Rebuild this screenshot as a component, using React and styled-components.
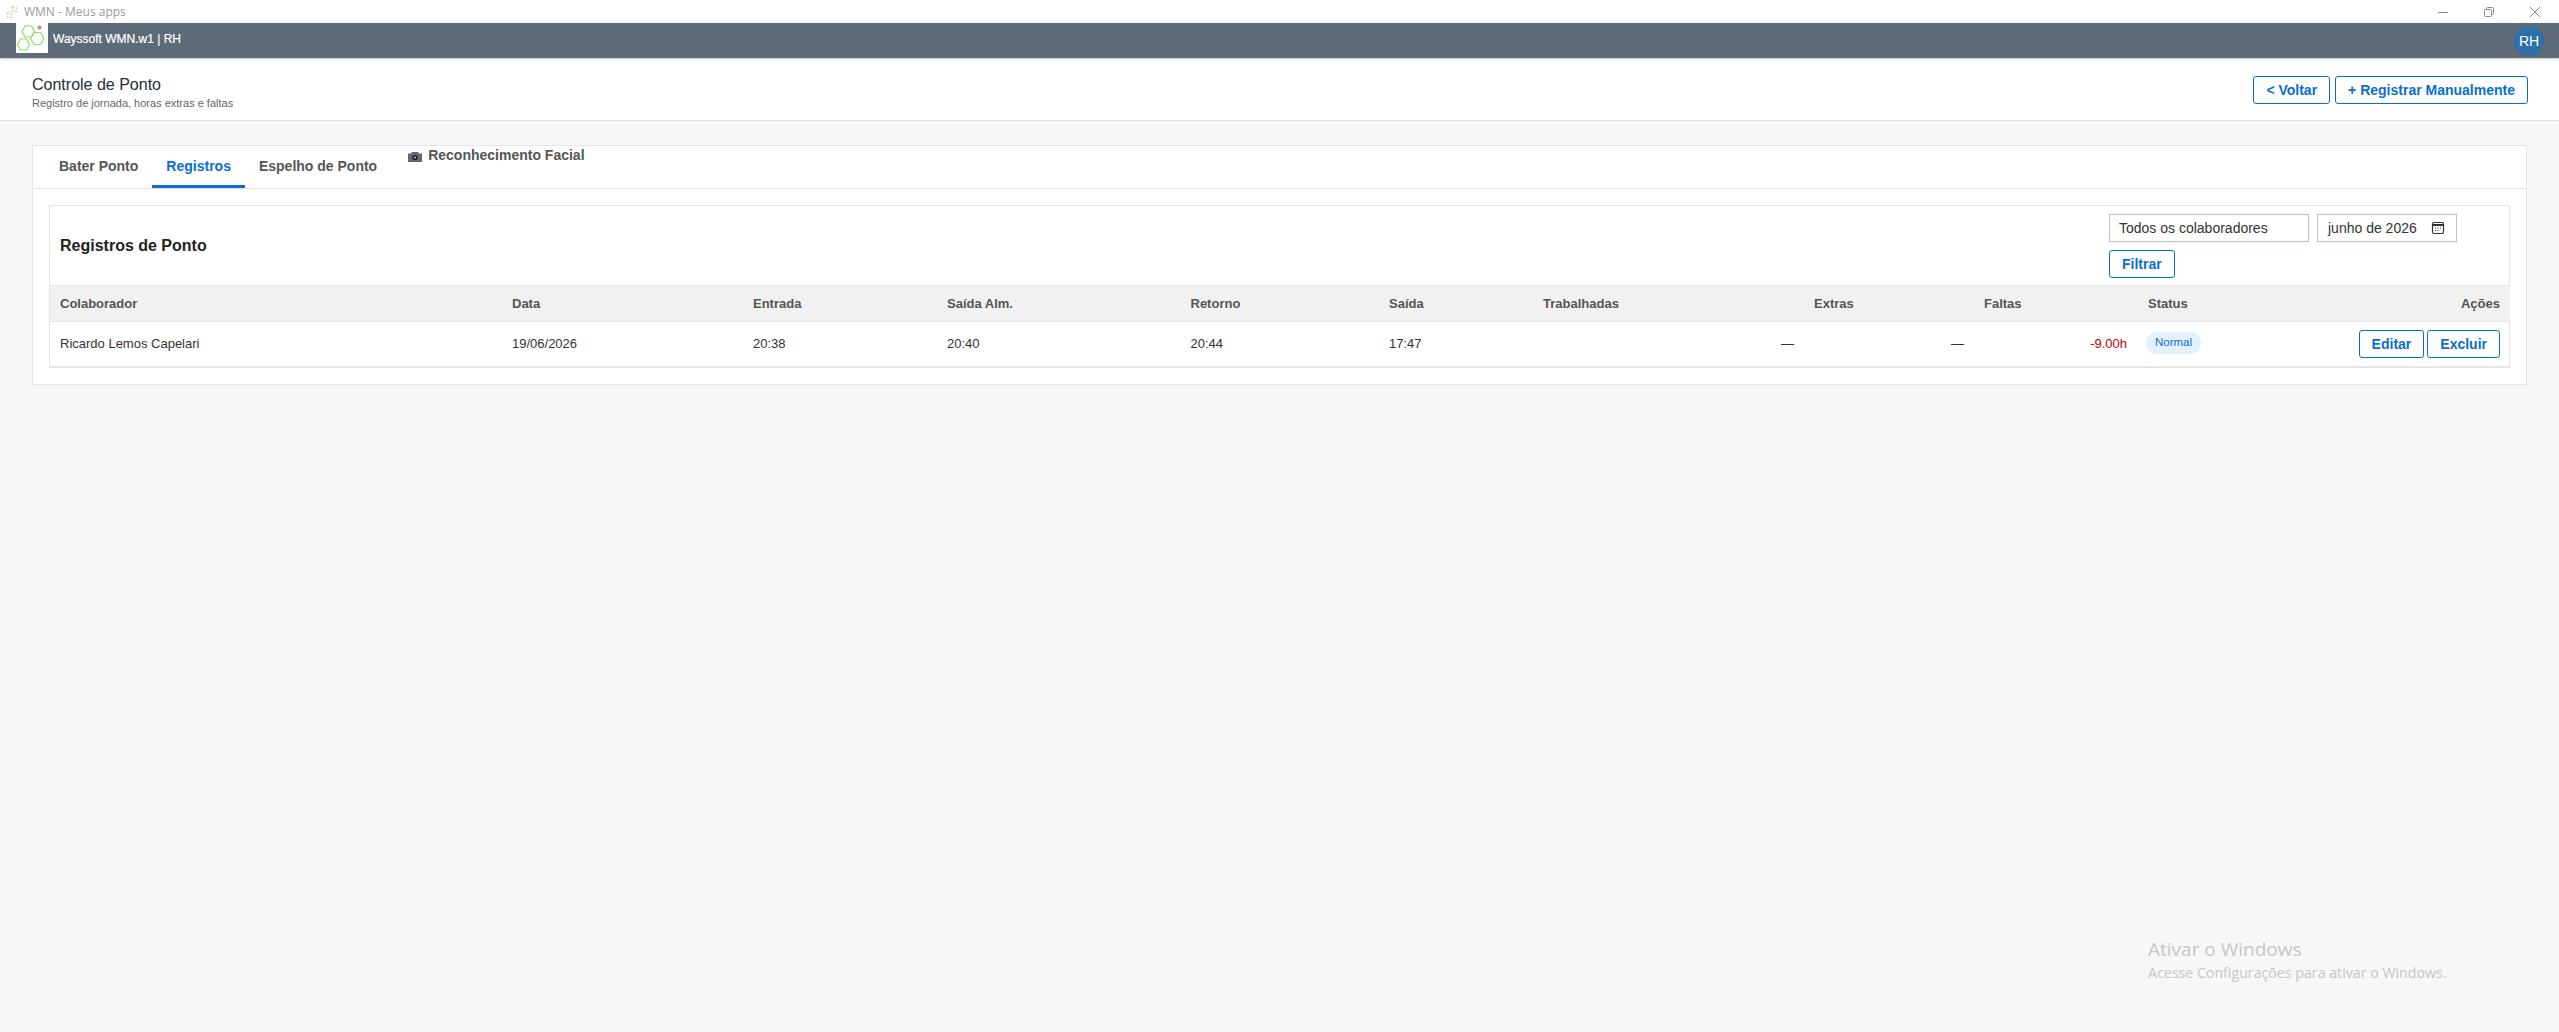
import React from 'react'
import styled, { createGlobalStyle } from 'styled-components'

const GlobalStyle = createGlobalStyle`
  html, body {
    margin: 0;
    padding: 0;
    background: #f7f7f7;
    font-family: "Liberation Sans", Arial, sans-serif;
  }
`

const columns = [452, 241, 194, 243.5, 198.5, 154, 271, 170, 164, 200, 172]

function Logo() {
  return (
    <LogoBox>
      <svg width="32" height="30" viewBox="0 0 32 30" fill="none" stroke="#8fe05a" strokeWidth="1.200">
        <path d="M9 3 H15.500 L18.500 8.500 L15.500 14 H9 L6 8.500 Z" />
        <path d="M4.500 16 H10.500 L13.500 21.500 L10.500 27 H4.500 L1.500 21.500 Z" />
        <path d="M18 9.500 H24.500 L28 15.500 L24.500 21.500 H18 L14.500 15.500 Z" />
        <circle cx="23.500" cy="4.500" r="2" fill="#9a9a9a" stroke="none" />
      </svg>
    </LogoBox>
  )
}

function CalendarIcon() {
  return (
    <svg width="14" height="14" viewBox="0 0 14 14" fill="none" stroke="#333" strokeWidth="1.200">
      <rect x="1.500" y="1.500" width="11" height="11" rx="1.500" />
      <path d="M1.500 4 H12.500" strokeWidth="2" />
      <path d="M4 7 H5 M6.500 7 H7.500 M9 7 H10 M4 9.500 H5 M6.500 9.500 H7.500" />
    </svg>
  )
}

function CameraIcon() {
  return (
    <svg width="14" height="11" viewBox="0 0 14 11">
      <path d="M0 2.500 H3 L4 1 H10 L11 2.500 H14 V11 H0 Z" fill="#6a666f" />
      <circle cx="7" cy="6.500" r="2.600" fill="#1f1c22" />
      <circle cx="7" cy="6.500" r="1" fill="#c9c9d2" />
    </svg>
  )
}

export default function App() {
  return (
    <Page>
      <GlobalStyle />
      <TitleBar>
        <TitleLeft>
          <svg width="16" height="16" viewBox="0 0 16 16" fill="none" stroke="#8fe05a" strokeWidth="1" strokeDasharray="2 2">
            <path d="M8 3 L12 3 L13 7 L9 8 Z M3 9 L7 9 L8 13 L4 14 Z" />
          </svg>
          WMN - Meus apps
        </TitleLeft>
        <WindowButtons>
          <svg width="10" height="10" viewBox="0 0 10 10" stroke="#8a8a8a" fill="none"><path d="M0 5.500 H10" /></svg>
          <svg width="10" height="10" viewBox="0 0 10 10" stroke="#8a8a8a" fill="none">
            <rect x="0.500" y="2.500" width="7" height="7" rx="1" />
            <path d="M2.500 2.500 V1.500 Q2.500 0.500 3.500 0.500 H8.500 Q9.500 0.500 9.500 1.500 V6.500 Q9.500 7.500 8.500 7.500 H7.500" />
          </svg>
          <svg width="10" height="10" viewBox="0 0 10 10" stroke="#8a8a8a" fill="none"><path d="M0 0 L10 10 M10 0 L0 10" /></svg>
        </WindowButtons>
      </TitleBar>

      <NavBar>
        <Logo />
        <Brand>Wayssoft WMN.w1 | RH</Brand>
        <Avatar>RH</Avatar>
      </NavBar>

      <PageHeader>
        <div>
          <PageTitle>Controle de Ponto</PageTitle>
          <PageSubtitle>Registro de jornada, horas extras e faltas</PageSubtitle>
        </div>
        <HeaderActions>
          <Button>&lt; Voltar</Button>
          <Button>+ Registrar Manualmente</Button>
        </HeaderActions>
      </PageHeader>

      <Content>
        <Card>
          <Tabs>
            <Tab>Bater Ponto</Tab>
            <Tab $active>Registros</Tab>
            <Tab>Espelho de Ponto</Tab>
            <Tab $raised><CameraIcon /> Reconhecimento Facial</Tab>
          </Tabs>

          <CardBody>
            <Panel>
              <PanelHeader>
                <PanelTitle>Registros de Ponto</PanelTitle>
                <Filters>
                  <Field $width={200}>Todos os colaboradores</Field>
                  <Field $width={140} $date>junho de 2026 <CalendarIcon /></Field>
                  <Button>Filtrar</Button>
                </Filters>
              </PanelHeader>

              <Table>
                <colgroup>
                  {columns.map((w, i) => <Col key={i} $w={w} />)}
                </colgroup>
                <thead>
                  <tr>
                    <Th>Colaborador</Th>
                    <Th>Data</Th>
                    <Th>Entrada</Th>
                    <Th>Saída Alm.</Th>
                    <Th>Retorno</Th>
                    <Th>Saída</Th>
                    <Th>Trabalhadas</Th>
                    <Th>Extras</Th>
                    <Th>Faltas</Th>
                    <Th>Status</Th>
                    <Th $right>Ações</Th>
                  </tr>
                </thead>
                <tbody>
                  <tr>
                    <Td>Ricardo Lemos Capelari</Td>
                    <Td>19/06/2026</Td>
                    <Td>20:38</Td>
                    <Td>20:40</Td>
                    <Td>20:44</Td>
                    <Td>17:47</Td>
                    <Td $right>—</Td>
                    <Td $right>—</Td>
                    <Td $right $negative>-9.00h</Td>
                    <Td><Badge>Normal</Badge></Td>
                    <ActionCell>
                      <RowActions>
                        <Button>Editar</Button>
                        <Button>Excluir</Button>
                      </RowActions>
                    </ActionCell>
                  </tr>
                </tbody>
              </Table>
            </Panel>
          </CardBody>
        </Card>
      </Content>

      <Watermark>
        <WatermarkTitle>Ativar o Windows</WatermarkTitle>
        <WatermarkText>Acesse Configurações para ativar o Windows.</WatermarkText>
      </Watermark>
    </Page>
  )
}

const Page = styled.div`
  position: relative;
  min-height: 1032px;
  background: #f7f7f7;
`

const TitleBar = styled.div`
  height: 23px;
  background: #fff;
  display: flex;
  align-items: center;
  justify-content: space-between;
`

const TitleLeft = styled.div`
  display: flex;
  align-items: center;
  gap: 4px;
  padding-left: 4px;
  font-family: "Open Sans", sans-serif;
  font-size: 12px;
  color: #9a9a9a;
`

const WindowButtons = styled.div`
  display: flex;
  align-items: center;
  gap: 36px;
  padding-right: 19px;
`

const NavBar = styled.div`
  height: 35px;
  background: #5c6b77;
  display: flex;
  align-items: flex-start;
  padding: 0 15px 0 16px;
  box-shadow: 0 1px 2px rgba(0, 0, 0, 0.25);
  position: relative;
`

const LogoBox = styled.div`
  width: 32px;
  height: 30px;
  background: #fff;
`

const Brand = styled.div`
  margin: 9px 0 0 5px;
  font-size: 12px;
  line-height: 15px;
  color: #fff;
  -webkit-text-stroke: 0.2px #fff;
`

const Avatar = styled.div`
  width: 30px;
  height: 30px;
  margin: 3px 0 0 auto;
  border-radius: 50%;
  background: #2f6fa8;
  color: #fff;
  font-size: 14px;
  display: flex;
  align-items: center;
  justify-content: center;
`

const PageHeader = styled.div`
  height: 62px;
  background: #fff;
  border-bottom: 1px solid #e2e2e2;
  display: flex;
  align-items: center;
  justify-content: space-between;
  padding: 0 31px 0 32px;
`

const PageTitle = styled.div`
  font-size: 16px;
  color: #22303c;
  line-height: 20px;
  margin-top: 7px;
`

const PageSubtitle = styled.div`
  font-size: 11px;
  color: #666;
  line-height: 14px;
  margin-top: 1px;
`

const HeaderActions = styled.div`
  display: flex;
  gap: 5px;
  margin-top: 2px;
`

const Button = styled.button`
  height: 28px;
  padding: 0 12px;
  background: #fff;
  border: 1px solid #0a6ed1;
  border-radius: 3px;
  color: #0a6ed1;
  font-family: inherit;
  font-size: 14px;
  font-weight: 700;
`

const Content = styled.div`
  padding: 24px 32px 0;
`

const Card = styled.div`
  background: #fff;
  border: 1px solid #e5e5e5;
`

const Tabs = styled.div`
  display: flex;
  height: 42px;
  padding-left: 12px;
  border-bottom: 1px solid #e0e0e0;
`

const Tab = styled.div`
  display: flex;
  align-items: ${({ $raised }) => ($raised ? 'flex-start' : 'center')};
  gap: 6px;
  padding: ${({ $raised }) => ($raised ? '1px 14px 0 17px' : '0 14px')};
  font-size: 14px;
  line-height: 16px;
  font-weight: 700;
  color: ${({ $active }) => ($active ? '#0a6ed1' : '#555')};
  border-bottom: 3px solid ${({ $active }) => ($active ? '#0a6ed1' : 'transparent')};
  svg { margin-top: 4px; }
`

const CardBody = styled.div`
  padding: 16px;
`

const Panel = styled.div`
  background: #fff;
  border: 1px solid #e5e5e5;
  border-bottom-width: 2px;
`

const PanelHeader = styled.div`
  display: flex;
  justify-content: space-between;
  align-items: center;
  padding: 8px 8px 7px 10px;
  border-bottom: 1px solid #e5e5e5;
`

const PanelTitle = styled.div`
  font-size: 16px;
  font-weight: 700;
  color: #222;
`

const Filters = styled.div`
  display: flex;
  flex-wrap: wrap;
  gap: 8px;
  width: 392px;
`

const Field = styled.div`
  box-sizing: border-box;
  width: ${({ $width }) => $width}px;
  height: 28px;
  padding: ${({ $date }) => ($date ? '0 11px 0 10px' : '0 9px')};
  border: 1px solid #b6c2cf;
  background: #fff;
  font-size: 14px;
  color: #333;
  display: flex;
  align-items: center;
  justify-content: space-between;
`

const Table = styled.table`
  width: 100%;
  table-layout: fixed;
  border-collapse: collapse;
`

const Col = styled.col`
  width: ${({ $w }) => $w}px;
`

const Th = styled.th`
  height: 35px;
  padding: 0 10px;
  background: #f1f1f1;
  border-bottom: 1px solid #e5e5e5;
  font-size: 13px;
  font-weight: 700;
  color: #555;
  text-align: ${({ $right }) => ($right ? 'right' : 'left')};
`

const Td = styled.td`
  height: 42px;
  padding: 0 ${({ $negative }) => ($negative ? '11px' : '10px')} 2px 10px;
  font-size: 13px;
  color: ${({ $negative }) => ($negative ? '#c40000' : '#333')};
  text-align: ${({ $right }) => ($right ? 'right' : 'left')};
`

const ActionCell = styled(Td)`
  height: 44px;
  padding: 0 10px;
`

const Badge = styled.span`
  display: inline-block;
  padding: 0 9px;
  height: 22px;
  line-height: 20px;
  border-radius: 11px;
  background: #e3f0fd;
  color: #0a6ed1;
  font-size: 11.5px;
  margin-left: -2px;
`

const RowActions = styled.div`
  display: flex;
  justify-content: flex-end;
  gap: 3px;
`

const Watermark = styled.div`
  position: absolute;
  left: 2148px;
  top: 936px;
  font-family: "Open Sans", sans-serif;
  color: #c6c6c6;
`

const WatermarkTitle = styled.div`
  font-size: 19px;
  line-height: 27px;
`

const WatermarkText = styled.div`
  font-size: 14.2px;
  line-height: 20px;
`
